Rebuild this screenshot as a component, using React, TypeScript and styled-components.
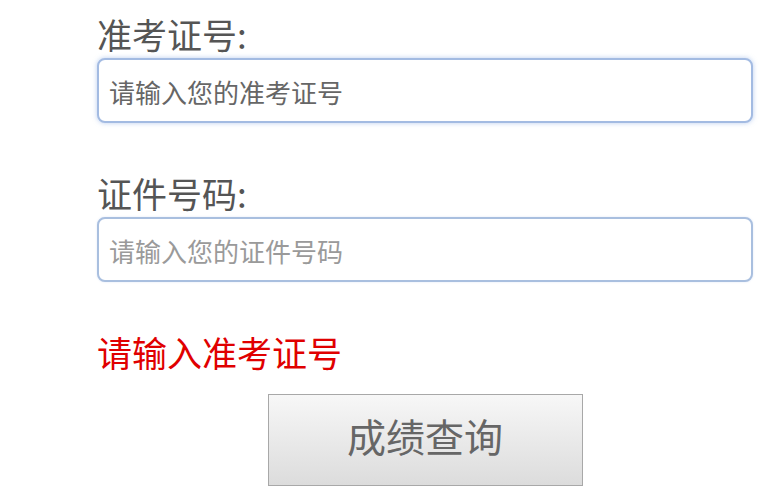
import styled, { createGlobalStyle } from 'styled-components'

const GlobalStyle = createGlobalStyle`
  body {
    margin: 0;
    background: #fff;
    font-family: "Noto Sans CJK SC", "Noto Sans", sans-serif;
  }
`

const Form = styled.form`
  display: flex;
  flex-direction: column;
  margin-left: 97px;
  width: 656px;
  padding-top: 10px;
`

const Field = styled.div`
  display: flex;
  flex-direction: column;
  margin-bottom: 46px;
`

const Label = styled.label`
  color: #555;
  font-size: 35px;
  line-height: 48px;
`

const Input = styled.input<{ $focused?: boolean }>`
  box-sizing: border-box;
  height: 65px;
  width: 100%;
  padding: 2px 10px 0;
  border: 2px solid ${(p) => (p.$focused ? '#a3bbe2' : '#a9bfdf')};
  border-radius: 8px;
  box-shadow: ${(p) =>
    p.$focused ? '0 0 5px rgba(130, 165, 225, 0.55)' : '0 0 2px rgba(130, 165, 225, 0.3)'};
  font-family: inherit;
  font-size: 26px;
  outline: none;

  &::placeholder {
    color: ${(p) => (p.$focused ? '#666' : '#9a9a9a')};
  }
`

const Error = styled.p`
  color: #e00000;
  font-size: 35px;
  line-height: 48px;
  margin: 0 0 18px;
`

const Submit = styled.button`
  align-self: center;
  width: 315px;
  height: 92px;
  padding: 0 0 10px;
  border: 1px solid #a8a8a8;
  background: linear-gradient(#f7f7f7, #dcdcdc);
  color: #666;
  font-family: inherit;
  font-size: 39px;
`

export default function App() {
  return (
    <>
      <GlobalStyle />
      <Form onSubmit={(e) => e.preventDefault()}>
        <Field>
          <Label>准考证号:</Label>
          <Input $focused placeholder="请输入您的准考证号" />
        </Field>
        <Field>
          <Label>证件号码:</Label>
          <Input placeholder="请输入您的证件号码" />
        </Field>
        <Error>请输入准考证号</Error>
        <Submit type="submit">成绩查询</Submit>
      </Form>
    </>
  )
}
